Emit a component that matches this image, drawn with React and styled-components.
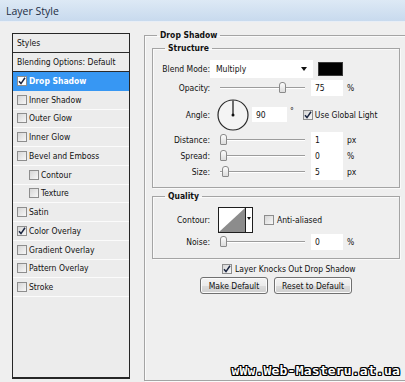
import React from "react";
import styled, { createGlobalStyle } from "styled-components";

const GlobalStyle = createGlobalStyle`
  html, body {
    margin: 0;
    padding: 0;
  }
  body {
    background: #efefef;
    font-family: "DejaVu Sans Condensed", "DejaVu Sans", Tahoma, sans-serif;
    font-size: 8.5px;
    color: #111;
  }
`;

const Dialog = styled.div`
  position: relative;
  width: 405px;
  height: 382px;
  overflow: hidden;
  background: #efefef;
  display: flex;
  flex-direction: column;
`;

const TitleBar = styled.div`
  height: 22px;
  box-sizing: border-box;
  padding-left: 6px;
  display: flex;
  align-items: center;
  background: linear-gradient(#dde9f5, #c8daee);
  border-bottom: 1px solid #e8eef6;
  font-family: "Open Sans", "Noto Sans", sans-serif;
  font-size: 10.5px;
  color: #1d2e44;
  flex-shrink: 0;
`;

const Body = styled.div`
  display: flex;
  align-items: flex-start;
  padding: 11px 0 0 12px;
`;

/* ---------- left list ---------- */

const StylesList = styled.div`
  width: 118px;
  height: 346px;
  box-sizing: border-box;
  border: 1px solid #262626;
  border-bottom-width: 2px;
  background: #ececec;
  flex-shrink: 0;
`;

const ListHeader = styled.div`
  height: 19px;
  box-sizing: border-box;
  border-bottom: 1px solid #2b2b2b;
  padding-left: 4px;
  display: flex;
  align-items: center;
`;

const ListItem = styled.div`
  height: 18.75px;
  box-sizing: border-box;
  display: flex;
  align-items: center;
  gap: 2px;
  padding-left: ${({ $indent }) => ($indent ? 16 : 4)}px;
  border-bottom: 1px solid ${({ $active }) => ($active ? "#3797f3" : "#fbfbfb")};
  background: ${({ $active }) => ($active ? "#3797f3" : "transparent")};
  color: ${({ $active }) => ($active ? "#fff" : "#111")};
  font-weight: ${({ $active }) => ($active ? "bold" : "normal")};
`;

const Box = styled.span`
  width: 10px;
  height: 10px;
  box-sizing: border-box;
  flex-shrink: 0;
  border: 1px solid #8d8d8d;
  background: ${({ $white }) =>
    $white ? "#fff" : "linear-gradient(135deg, #d6d6d6, #f7f7f7)"};
  display: inline-flex;
  align-items: center;
  justify-content: center;
`;

const Checkbox = ({ checked, white }) => (
  <Box $white={white}>
    {checked && (
      <svg width="8" height="8" viewBox="0 0 8 8">
        <path
          d="M1 4.3 L3 6.6 L7 0.8"
          fill="none"
          stroke="#1a2540"
          strokeWidth="1.5"
        />
      </svg>
    )}
  </Box>
);

/* ---------- right panel ---------- */

const Group = styled.fieldset`
  margin: 0;
  min-width: 0;
  box-sizing: border-box;
  border: 1px solid #a4a4a4;
  box-shadow: 1px 1px 0 #fafafa, inset 1px 1px 0 #fafafa;
  padding: 0;
  flex-shrink: 0;
`;

const Legend = styled.legend`
  padding: 0 3px;
  margin-left: ${({ $offset }) => $offset}px;
  font-weight: bold;
  line-height: 12px;
  height: 12px;
`;

const OuterGroup = styled(Group)`
  width: 268px;
  height: 352px;
  margin: -4px 0 0 14px;
  padding-left: 7px;
`;

const SubGroup = styled(Group)`
  width: 248px;
  height: ${({ $h }) => $h}px;
  margin-top: ${({ $mt }) => $mt}px;
  display: flex;
  flex-direction: column;
  padding-top: ${({ $pt }) => $pt}px;
`;

const Row = styled.div`
  height: ${({ $h }) => $h}px;
  display: flex;
  align-items: center;
  flex-shrink: 0;
`;

const Label = styled.span`
  width: 57px;
  text-align: right;
  flex-shrink: 0;
`;

const Select = styled.div`
  width: 103px;
  height: 18px;
  box-sizing: border-box;
  background: #fff;
  padding: 0 6px 0 6px;
  display: flex;
  align-items: center;
  justify-content: space-between;
`;

const Arrow = () => (
  <svg width="6" height="4" viewBox="0 0 6 4">
    <path d="M0 0 H6 L3 4 Z" fill="#111" />
  </svg>
);

const Swatch = styled.div`
  width: 25px;
  height: 14px;
  margin-left: 5px;
  box-sizing: border-box;
  background: #000;
  border: 1px solid #3a3a3a;
`;

const SliderTrack = styled.div`
  position: relative;
  width: 85px;
  height: 12px;
  margin-left: 10px;
  flex-shrink: 0;

  &::before {
    content: "";
    position: absolute;
    left: 0;
    right: 0;
    top: 5px;
    height: 1px;
    background: #9c9c9c;
    box-shadow: 0 1px 0 #fff;
  }
`;

const Thumb = styled.div`
  position: absolute;
  top: 0;
  width: 7px;
  height: 11px;
  box-sizing: border-box;
  border: 1px solid #8a8a8a;
  border-radius: 3px 3px 1px 1px;
  background: linear-gradient(#fdfdfd, #dcdcdc);
`;

const Slider = ({ value, max }) => (
  <SliderTrack>
    <Thumb style={{ left: `${(value / max) * 78}px` }} />
  </SliderTrack>
);

const Field = styled.div`
  width: ${({ $w }) => $w || 32}px;
  height: ${({ $hh }) => $hh || 16}px;
  margin-left: ${({ $ml }) => ($ml === undefined ? 6 : $ml)}px;
  box-sizing: border-box;
  background: #fff;
  padding-left: 4px;
  display: flex;
  align-items: center;
  flex-shrink: 0;
`;

const Unit = styled.span`
  margin-left: ${({ $ml }) => $ml || 4}px;
  align-self: ${({ $top }) => ($top ? "flex-start" : "center")};
  margin-top: ${({ $top }) => ($top ? "9px" : "0")};
`;

const Dial = styled.svg`
  margin-left: 7px;
  flex-shrink: 0;
`;

const CheckLabel = styled.label`
  display: flex;
  align-items: center;
  gap: ${({ $gap }) => $gap || 2}px;
  margin-left: ${({ $ml }) => $ml}px;
`;

const ContourPreview = styled.svg`
  margin-left: 8px;
  flex-shrink: 0;
`;

const Knockout = styled.div`
  margin: 4px 0 0 70px;
  height: 11px;
  display: flex;
  align-items: center;
`;

const Buttons = styled.div`
  width: 248px;
  margin-top: 3px;
  display: flex;
  justify-content: center;
  gap: 6px;
`;

const Button = styled.button`
  width: ${({ $w }) => $w}px;
  height: 17px;
  padding: 0;
  border: 1px solid #707070;
  border-radius: 3px;
  background: linear-gradient(#f3f3f3, #ebebeb 50%, #dcdcdc 51%, #cfcfcf);
  font: inherit;
  color: #111;
  box-shadow: inset 0 0 0 1px #fbfbfb;
`;

const Watermark = styled.div`
  position: absolute;
  right: 5px;
  bottom: 4px;
  font-family: "DejaVu Sans Mono", monospace;
  font-weight: bold;
  font-size: 13px;
  letter-spacing: 0.2px;
  color: #fff;
  text-shadow: 1px 0 0 #000, -1px 0 0 #000, 0 1px 0 #000, 0 -1px 0 #000,
    1px 1px 0 #000, -1px -1px 0 #000, 1px -1px 0 #000, -1px 1px 0 #000;
`;

const effects = [
  { name: "Drop Shadow", checked: true, active: true },
  { name: "Inner Shadow" },
  { name: "Outer Glow" },
  { name: "Inner Glow" },
  { name: "Bevel and Emboss" },
  { name: "Contour", indent: true },
  { name: "Texture", indent: true },
  { name: "Satin" },
  { name: "Color Overlay", checked: true },
  { name: "Gradient Overlay" },
  { name: "Pattern Overlay" },
  { name: "Stroke" },
];

const sliders = [
  { label: "Distance:", value: 1, unit: "px" },
  { label: "Spread:", value: 0, unit: "%" },
  { label: "Size:", value: 5, unit: "px" },
];

export default function App() {
  return (
    <>
      <GlobalStyle />
      <Dialog>
        <TitleBar>Layer Style</TitleBar>
        <Body>
          <StylesList>
            <ListHeader>Styles</ListHeader>
            <ListHeader>Blending Options: Default</ListHeader>
            {effects.map((e) => (
              <ListItem key={e.name} $active={e.active} $indent={e.indent}>
                <Checkbox checked={e.checked} white={e.active} />
                {e.name}
              </ListItem>
            ))}
          </StylesList>

          <OuterGroup>
            <Legend $offset={5}>Drop Shadow</Legend>
            <SubGroup $h={146} $mt={1} $pt={5}>
              <Legend $offset={12}>Structure</Legend>
              <Row $h={20}>
                <Label>Blend Mode:</Label>
                <Select>
                  Multiply
                  <Arrow />
                </Select>
                <Swatch />
              </Row>
              <Row $h={18}>
                <Label>Opacity:</Label>
                <Slider value={75} max={100} />
                <Field>75</Field>
                <Unit>%</Unit>
              </Row>
              <Row $h={35}>
                <Label>Angle:</Label>
                <Dial width="32" height="32" viewBox="0 0 32 32">
                  <circle cx="16" cy="16" r="15" fill="#f4f4f4" stroke="#2a2a2a" strokeWidth="1.2" />
                  <line x1="16" y1="16" x2="16" y2="1.5" stroke="#111" strokeWidth="1.2" />
                  <circle cx="16" cy="16" r="1.5" fill="#111" />
                </Dial>
                <Field $w={35} $hh={15} $ml={3}>90</Field>
                <Unit $ml={3} $top>°</Unit>
                <CheckLabel $ml={9} $gap={2}>
                  <Checkbox checked />
                  Use Global Light
                </CheckLabel>
              </Row>
              {sliders.map((s) => (
                <Row $h={16} key={s.label}>
                  <Label>{s.label}</Label>
                  <Slider value={s.value} max={250} />
                  <Field>{s.value}</Field>
                  <Unit>{s.unit}</Unit>
                </Row>
              ))}
            </SubGroup>

            <SubGroup $h={69} $mt={2} $pt={4}>
              <Legend $offset={12}>Quality</Legend>
              <Row $h={28}>
                <Label>Contour:</Label>
                <ContourPreview width="35" height="26" viewBox="0 0 35 26">
                  <rect x="0.5" y="0.5" width="34" height="25" fill="#fff" stroke="#1e1e1e" />
                  <path d="M1 25 L27 1 L27 25 Z" fill="#8c8c8c" />
                  <line x1="27.5" y1="0" x2="27.5" y2="26" stroke="#1e1e1e" />
                  <path d="M29 10 H33 L31 13 Z" fill="#111" />
                </ContourPreview>
                <CheckLabel $ml={11} $gap={3}>
                  <Checkbox />
                  Anti-aliased
                </CheckLabel>
              </Row>
              <Row $h={16}>
                <Label>Noise:</Label>
                <Slider value={0} max={100} />
                <Field>0</Field>
                <Unit>%</Unit>
              </Row>
            </SubGroup>

            <Knockout>
              <CheckLabel $ml={0} $gap={3}>
                <Checkbox checked />
                Layer Knocks Out Drop Shadow
              </CheckLabel>
            </Knockout>
            <Buttons>
              <Button $w={68}>Make Default</Button>
              <Button $w={78}>Reset to Default</Button>
            </Buttons>
          </OuterGroup>
        </Body>
        <Watermark>wWw.Web-Masteru.at.ua</Watermark>
      </Dialog>
    </>
  );
}
